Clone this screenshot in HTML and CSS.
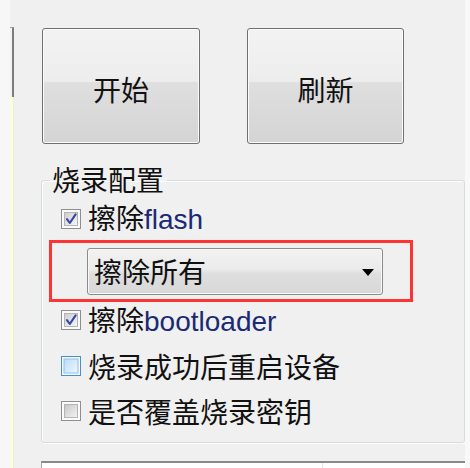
FILE: index.html
```html
<!DOCTYPE html>
<html lang="zh">
<head>
<meta charset="utf-8">
<title>烧录配置</title>
<link rel="stylesheet" href="styles.css">
</head>
<body>
<div class="app">
  <div class="edge-left"></div>
  <div class="rail">
    <div class="rail-space"></div>
    <div class="rail-frame"></div>
    <div class="rail-yellow"></div>
  </div>
  <main class="main">
    <div class="buttons">
      <button class="btn" type="button">开始</button>
      <button class="btn btn-refresh" type="button">刷新</button>
    </div>
    <fieldset class="group">
      <legend class="group-title">烧录配置</legend>
      <label class="check-row row1">
        <svg class="cb" width="20" height="20" viewBox="0 0 20 20">
          <defs><linearGradient id="ga" x1="0" y1="0" x2="1" y2="1"><stop offset="0" stop-color="#cdcdcd"/><stop offset="1" stop-color="#f7f7f7"/></linearGradient></defs>
          <rect x="0.5" y="0.5" width="19" height="19" fill="#fbfbfb" stroke="#8f8f8f"/>
          <rect x="3.5" y="3.5" width="13" height="13" fill="url(#ga)" stroke="#b4b4b4"/>
          <path d="M6 10.2 L8.8 14 L14.6 5.4" fill="none" stroke="#3447a8" stroke-width="2.1" stroke-linecap="round" stroke-linejoin="round"/>
        </svg>
        <span class="lbl">擦除<span class="latin">flash</span></span>
      </label>
      <div class="highlight">
        <div class="combo">
          <span class="combo-text">擦除所有</span>
          <span class="combo-arrow"></span>
        </div>
      </div>
      <label class="check-row row2">
        <svg class="cb" width="20" height="20" viewBox="0 0 20 20">
          <defs><linearGradient id="gb" x1="0" y1="0" x2="1" y2="1"><stop offset="0" stop-color="#cdcdcd"/><stop offset="1" stop-color="#f7f7f7"/></linearGradient></defs>
          <rect x="0.5" y="0.5" width="19" height="19" fill="#fbfbfb" stroke="#8f8f8f"/>
          <rect x="3.5" y="3.5" width="13" height="13" fill="url(#gb)" stroke="#b4b4b4"/>
          <path d="M6 10.2 L8.8 14 L14.6 5.4" fill="none" stroke="#3447a8" stroke-width="2.1" stroke-linecap="round" stroke-linejoin="round"/>
        </svg>
        <span class="lbl">擦除<span class="latin">bootloader</span></span>
      </label>
      <label class="check-row row3">
        <svg class="cb" width="20" height="20" viewBox="0 0 20 20">
          <defs><linearGradient id="gc" x1="0" y1="0" x2="1" y2="1"><stop offset="0" stop-color="#bcdcf6"/><stop offset="1" stop-color="#eef7fe"/></linearGradient></defs>
          <rect x="0.5" y="0.5" width="19" height="19" fill="#f4faff" stroke="#4a8fc6"/>
          <rect x="3" y="3" width="14" height="14" fill="url(#gc)" stroke="#8fc0e8" stroke-width="1"/>
        </svg>
        <span class="lbl">烧录成功后重启设备</span>
      </label>
      <label class="check-row row4">
        <svg class="cb" width="20" height="20" viewBox="0 0 20 20">
          <defs><linearGradient id="gd" x1="0" y1="0" x2="1" y2="1"><stop offset="0" stop-color="#c6c6c6"/><stop offset="1" stop-color="#f4f4f4"/></linearGradient></defs>
          <rect x="0.5" y="0.5" width="19" height="19" fill="#fbfbfb" stroke="#8f8f8f"/>
          <rect x="3.5" y="3.5" width="13" height="13" fill="url(#gd)" stroke="#b4b4b4"/>
        </svg>
        <span class="lbl">是否覆盖烧录密钥</span>
      </label>
    </fieldset>
    <div class="bottom-box">
      <div class="bottom-cell"></div>
      <div class="bottom-cell-rest"></div>
    </div>
  </main>
  <div class="edge-right"></div>
</div>
</body>
</html>
```
FILE: styles.css
```css
html, body {
  margin: 0;
  padding: 0;
  background: #f0f0f0;
  overflow: hidden;
}

.app {
  display: flex;
  width: 470px;
  height: 468px;
  overflow: hidden;
  font-family: "Noto Sans CJK SC", "Liberation Sans", sans-serif;
  font-size: 28px;
  color: #000;
}

.edge-left {
  width: 10px;
  flex: none;
  background: #f7f7f7;
}

.rail {
  width: 4px;
  flex: none;
  display: flex;
  flex-direction: column;
}

.rail-space {
  height: 27px;
  background: #f0f0f0;
}

.rail-frame {
  height: 69px;
  border-top: 1px solid #a5a5a5;
  border-right: 2px solid #7d7d7d;
  background: #f3f3f3;
}

.rail-yellow {
  flex: 1;
  background: #fcfce4;
  border-right: 1px solid #ecedd8;
}

.main {
  flex: 1;
  padding-left: 27px;
  display: flex;
  flex-direction: column;
  min-width: 0;
}

.edge-right {
  width: 5px;
  flex: none;
  background: #f8f8f8;
}

/* buttons */
.buttons {
  display: flex;
  gap: 47px;
  margin-top: 28px;
  margin-left: 1px;
}

.btn {
  width: 158px;
  height: 116px;
  border: 1px solid #707070;
  border-radius: 3px;
  box-shadow: inset 0 0 0 1px #fbfbfb;
  background: linear-gradient(#f3f3f3 0%, #ededed 46%, #dfdfdf 47%, #d4d4d4 100%);
  font-family: "Noto Sans CJK SC", sans-serif;
  font-size: 28px;
  color: #111;
  padding: 5px 0 0 0;
  margin: 0;
}

.btn-refresh {
  width: 157px;
}

/* group */
.group {
  margin: 20px 0 0 0;
  padding: 0 0 9px 0;
  border: 1px solid #d3dce3;
  border-radius: 3px;
  box-shadow: inset 1px 1px 0 #ffffff, 1px 1px 0 #fbfbfb;
  min-width: 0;
}

.group-title {
  margin-left: 8px;
  padding: 0 3px 0 2px;
  height: 32px;
  line-height: 30px;
  font-size: 28px;
  color: #111;
}

.check-row {
  display: flex;
  align-items: center;
  gap: 7px;
  height: 45px;
  padding-left: 19px;
}

.row2 { height: 46px; }

.cb {
  flex: none;
  display: block;
}

.lbl {
  line-height: 32px;
  color: #111;
  white-space: nowrap;
}

.latin {
  font-family: "Liberation Sans", sans-serif;
  color: #1a2a74;
}

/* highlighted dropdown */
.highlight {
  margin: -1px 0 -5px 7px;
  width: 364px;
  height: 62px;
  box-sizing: border-box;
  border: 3px solid #fd3434;
  display: flex;
  align-items: center;
  padding-left: 35px;
}

.combo {
  width: 296px;
  height: 47px;
  box-sizing: border-box;
  border: 1px solid #8c8c8c;
  border-radius: 3px;
  box-shadow: inset 0 0 0 1px #f8f8f8;
  background: linear-gradient(#f2f2f2 0%, #ebebeb 45%, #dedede 55%, #d8d8d8 100%);
  display: flex;
  align-items: center;
  justify-content: space-between;
  padding: 0 8px 0 6px;
}

.combo-text {
  line-height: 32px;
  color: #111;
}

.combo-arrow {
  width: 0;
  height: 0;
  border-left: 6px solid transparent;
  border-right: 6px solid transparent;
  border-top: 7px solid #000;
  margin-top: 2px;
}

/* bottom box */
.bottom-box {
  margin-top: 18px;
  height: 30px;
  display: flex;
  border-top: 2px solid #8a8a8a;
  border-left: 1px solid #a4a4a4;
  background: #ffffff;
}

.bottom-cell {
  width: 280px;
  border-right: 1px solid #e6e6e6;
}

.bottom-cell-rest {
  flex: 1;
}
```
